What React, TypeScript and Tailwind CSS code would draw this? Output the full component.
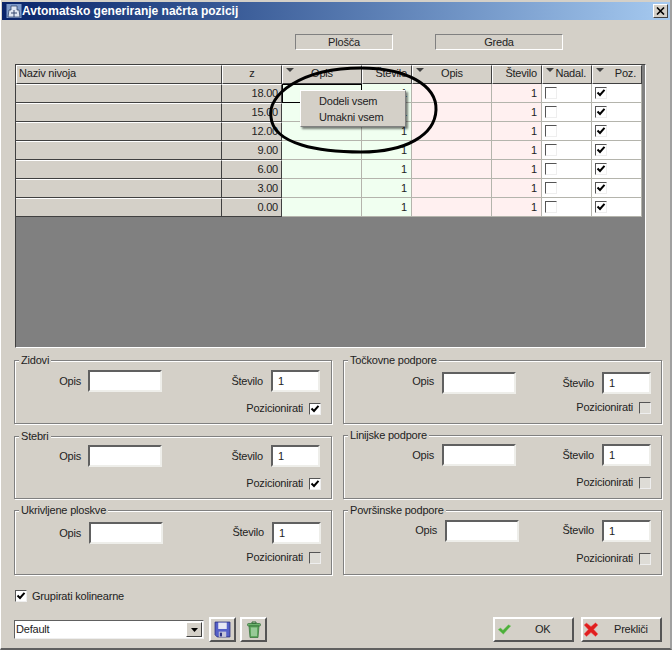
import React from "react";

const rows = ["18.00", "15.00", "12.00", "9.00", "6.00", "3.00", "0.00"];

function Arrow() {
  return (
    <svg width="8" height="5" viewBox="0 0 8 5" className="absolute left-[3px] top-[2px]">
      <polygon points="0,0 8,0 4,4" fill="#404040" />
    </svg>
  );
}

function Tick() {
  return (
    <svg width="10" height="10" viewBox="0 0 10 10" className="block">
      <path d="M1.5 4.5 L4 7 L8.5 1.8" fill="none" stroke="#000" strokeWidth="2" />
    </svg>
  );
}

function Check({ on, fill }: { on?: boolean; fill?: boolean }) {
  return (
    <div className={`w-[12px] h-[12px] shrink-0 border border-t-[#555] border-l-[#555] border-r-[#eee] border-b-[#eee] ${on || fill ? "bg-white" : "bg-[#dedcd6]"}`}>
      {on && <Tick />}
    </div>
  );
}

function HeadCell({ label, arrow, className }: { label: string; arrow?: boolean; className?: string }) {
  return (
    <div className={`relative h-[19px] leading-[15px] border-t border-l border-t-white border-l-white border-r border-b border-r-[#404040] border-b-[#404040] bg-[#d4d0c8] ${className || ""}`}>
      {arrow && <Arrow />}
      {label}
    </div>
  );
}

function Cell({ children, className }: { children?: React.ReactNode; className?: string }) {
  return <div className={`h-[19px] leading-[18px] border-r border-b border-r-[#b4b4ac] border-b-[#b4b4ac] ${className || ""}`}>{children}</div>;
}

function Field({ value, className }: { value?: string; className?: string }) {
  return (
    <div className={`h-[22px] leading-[18px] pl-[5px] bg-white border-2 border-t-[#606060] border-l-[#606060] border-r-[#eeeeea] border-b-[#eeeeea] ${className || ""}`}>
      {value}
    </div>
  );
}

function GroupBox(props: {
  title: string;
  on?: boolean;
  boxClass: string;
  rowClass: string;
  labelClass: string;
  numClass?: string;
  checkClass: string;
}) {
  return (
    <div className={`relative border border-[#808080] shadow-[1px_1px_0_#fff,inset_1px_1px_0_#fff] ${props.boxClass}`}>
      <div className="absolute left-[4px] top-[-7px] px-[2px] bg-[#d4d0c8] leading-[13px]">{props.title}</div>
      <div className={`flex items-center ${props.rowClass}`}>
        <div className={`text-right ${props.labelClass}`}>Opis</div>
        <Field className="w-[74px]" />
        <div className={`ml-auto ${props.numClass || ""}`}>Število</div>
        <Field value="1" className="w-[49px] ml-[8px]" />
      </div>
      <div className={`flex items-center justify-end gap-[6px] h-[12px] ${props.checkClass}`}>
        <span className="mb-px">Pozicionirati</span>
        <Check on={props.on} />
      </div>
    </div>
  );
}

function Floppy() {
  return (
    <svg width="17" height="17" viewBox="0 0 16 16">
      <path d="M1 1 H15 V15 H3 L1 13 Z" fill="#5560c8" stroke="#2a2f80" strokeWidth="0.8" />
      <rect x="4" y="1.5" width="8" height="6" fill="#e8e8f4" />
      <rect x="4.5" y="10" width="7" height="5" fill="#c4c4d8" />
      <rect x="5.5" y="11" width="2" height="3.5" fill="#2a2f80" />
    </svg>
  );
}

function Trash() {
  return (
    <svg width="16" height="19" viewBox="0 0 16 18">
      <path d="M6 1.5 H10 V3 H6 Z" fill="none" stroke="#2f6b35" />
      <rect x="1.5" y="3" width="13" height="2.5" rx="1" fill="#6fb56f" stroke="#2f6b35" strokeWidth="0.7" />
      <path d="M3 5.5 H13 L12 17 H4 Z" fill="#5ea85e" stroke="#2f6b35" strokeWidth="0.7" />
      <path d="M6 7 V15.5 M8 7 V15.5 M10 7 V15.5" stroke="#d0ecd0" strokeWidth="1" />
    </svg>
  );
}

function GreenCheck() {
  return (
    <svg width="15" height="11" viewBox="0 0 18 14">
      <path d="M1 7 L4 5 L7 8 L14 1 L17 2.5 L7.5 13 Z" fill="#4caf3a" stroke="#7cc86a" strokeWidth="0.6" />
    </svg>
  );
}

function RedCross() {
  return (
    <svg width="16" height="15" viewBox="0 0 16 15">
      <path d="M1 3 L3.5 1 L8 4.5 L12.5 0.8 L15 3 L10.8 7.5 L15 12 L12.5 14.5 L8 10.5 L3.5 14.5 L1 12 L5.2 7.5 Z" fill="#e01f1f" stroke="#f07070" strokeWidth="0.5" />
    </svg>
  );
}

function ToolButton({ children }: { children: React.ReactNode }) {
  return (
    <div className="w-[27px] h-[25px] flex items-center justify-center bg-[#d4d0c8] border-2 border-t-white border-l-white border-r-[#555] border-b-[#555]">
      {children}
    </div>
  );
}

export default function App() {
  return (
    <div className="relative w-[672px] h-[650px] overflow-hidden bg-[#d4d0c8] text-[11px] tracking-[-0.2px] text-[#222] font-['Tahoma','Liberation_Sans',sans-serif] border-b-2 border-r-2 border-b-[#606060] border-r-[#a0a0a0] border-l border-l-white">
      {/* title bar */}
      <div className="mt-[2px] h-[18px] ml-[1px] flex items-center bg-gradient-to-r from-[#0a246a] to-[#a6caf0]">
        <svg width="16" height="16" viewBox="0 0 16 16" className="ml-[4px]">
          <rect x="0.5" y="1" width="15" height="14" fill="#7f9ac8" />
          <path d="M5 3 H11 V7 H13 L14 14 H2 L3 7 H5 Z" fill="#dfe6f2" stroke="#34466e" strokeWidth="0.8" />
          <path d="M5 10 H11 M8 7 V14" stroke="#34466e" />
        </svg>
        <span className="text-white font-bold text-[12px] tracking-[0px]">Avtomatsko generiranje načrta pozicij</span>
        <div className="ml-auto mr-[2px] w-[15px] h-[14px] flex items-center justify-center bg-[#d4d0c8] border border-t-white border-l-white border-r-[#404040] border-b-[#404040]">
          <svg width="9" height="8" viewBox="0 0 9 8">
            <path d="M1 0.5 L8 7.5 M8 0.5 L1 7.5" stroke="#000" strokeWidth="1.6" />
          </svg>
        </div>
      </div>

      {/* Plošča / Greda */}
      <div className="mt-[14px] h-[16px] flex ml-[294px]">
        <div className="w-[98px] text-center leading-[14px] border border-t-[#808080] border-l-[#808080] border-r-white border-b-white">Plošča</div>
        <div className="w-[128px] ml-[42px] text-center leading-[14px] border border-t-[#808080] border-l-[#808080] border-r-white border-b-white">Greda</div>
      </div>

      {/* table */}
      <div className="mt-[14px] ml-[14px] w-[631px] h-[284px] bg-[#808080] border border-t-[#404040] border-l-[#404040] border-r-white border-b-white">
        <div className="grid grid-cols-[206px_60px_80px_50px_80px_50px_50px_50px] w-[626px]">
          <HeadCell label="Naziv nivoja" className="pl-[2px]" />
          <HeadCell label="z" className="text-center" />
          <HeadCell label="Opis" arrow className="text-center" />
          <HeadCell label="Število" className="text-right pr-[4px]" />
          <HeadCell label="Opis" arrow className="text-center" />
          <HeadCell label="Število" className="text-right pr-[4px]" />
          <HeadCell label="Nadal." arrow className="text-right pr-[5px]" />
          <HeadCell label="Poz." arrow className="text-right pr-[5px]" />
          {rows.map((z, i) => (
            <React.Fragment key={z}>
              <div className="h-[19px] bg-[#d4d0c8] border-t border-t-white border-r border-b border-r-[#404040] border-b-[#404040]" />
              <div className="h-[19px] leading-[17px] text-right pr-[3px] bg-[#d4d0c8] border-t border-t-white border-r border-b border-r-[#404040] border-b-[#404040]">{z}</div>
              {i === 0 ? <div className="h-[19px] bg-[#f0fff0] border border-black" /> : <Cell className="bg-[#f0fff0]" />}
              <Cell className="bg-[#f0fff0] text-right pr-[4px]">1</Cell>
              <Cell className="bg-[#fff0f0]" />
              <Cell className="bg-[#fff0f0] text-right pr-[4px]">1</Cell>
              <Cell className="bg-white flex items-center pl-[3px]"><Check fill /></Cell>
              <Cell className="bg-white flex items-center pl-[3px]"><Check on /></Cell>
            </React.Fragment>
          ))}
        </div>
      </div>

      {/* group boxes */}
      <div className="mt-[12px] ml-[13px] flex gap-[11px]">
        <div className="w-[318px] flex flex-col">
          <GroupBox title="Zidovi" on boxClass="h-[64px]" rowClass="pt-[9px] pr-[11px]" labelClass="w-[66px] mr-[7px]" checkClass="mt-[11px] pr-[10px]" />
          <GroupBox title="Stebri" on boxClass="h-[63px] mt-[12px]" rowClass="pt-[8px] pr-[11px]" labelClass="w-[66px] mr-[7px]" checkClass="mt-[11px] pr-[10px]" />
          <GroupBox title="Ukrivljene ploskve" boxClass="h-[65px] mt-[11px]" rowClass="pt-[11px] pr-[10px]" labelClass="w-[66px] mr-[8px]" numClass="mb-[2px]" checkClass="mt-[8px] pr-[10px]" />
        </div>
        <div className="w-[319px] flex flex-col">
          <GroupBox title="Točkovne podpore" boxClass="h-[64px]" rowClass="pt-[11px] pr-[10px]" labelClass="w-[90px] mr-[8px] mb-[4px]" checkClass="mt-[8px] pr-[10px]" />
          <GroupBox title="Linijske podpore" boxClass="h-[64px] mt-[11px]" rowClass="pt-[8px] pr-[10px]" labelClass="w-[90px] mr-[8px]" checkClass="mt-[11px] pr-[10px]" />
          <GroupBox title="Površinske podpore" boxClass="h-[65px] mt-[11px]" rowClass="pt-[9px] pr-[10px]" labelClass="w-[93px] mr-[8px] mb-[2px]" numClass="mb-[2px]" checkClass="mt-[11px] pr-[10px]" />
        </div>
      </div>

      {/* options */}
      <div className="mt-[15px] ml-[14px] flex items-center gap-[5px] h-[12px]">
        <Check on />
        Grupirati kolinearne
      </div>

      {/* footer */}
      <div className="mt-[15px] ml-[13px] flex items-center h-[25px]">
        <div className="w-[190px] h-[19px] flex items-center bg-white border border-t-[#606060] border-l-[#606060] border-r-[#eee] border-b-[#eee] pl-[1px]">
          Default
          <div className="ml-auto w-[16px] h-[15px] flex items-center justify-center bg-[#d4d0c8] border border-t-white border-l-white border-r-[#404040] border-b-[#404040] mr-px">
            <svg width="7" height="4" viewBox="0 0 7 4"><polygon points="0,0 7,0 3.5,4" fill="#000" /></svg>
          </div>
        </div>
        <div className="ml-[5px]"><ToolButton><Floppy /></ToolButton></div>
        <div className="ml-[4px]"><ToolButton><Trash /></ToolButton></div>
        <div className="ml-auto mr-[8px] flex gap-[7px]">
          <div className="w-[81px] h-[25px] flex items-center pl-[2px] bg-[#d4d0c8] border-2 border-t-white border-l-white border-r-[#555] border-b-[#555]">
            <GreenCheck />
            <span className="ml-[23px]">OK</span>
          </div>
          <div className="w-[81px] h-[25px] flex items-center bg-[#d4d0c8] border-2 border-t-white border-l-white border-r-[#555] border-b-[#555]">
            <RedCross />
            <span className="ml-[15px]">Prekliči</span>
          </div>
        </div>
      </div>

      {/* context menu */}
      <div className="absolute left-[299px] top-[90px] w-[106px] h-[37px] pt-[2px] pl-[18px] bg-[#d4d0c8] border border-t-white border-l-white border-r-[#808080] border-b-[#808080] shadow-[2px_2px_2px_rgba(0,0,0,0.5)] leading-[16px]">
        <div>Dodeli vsem</div>
        <div>Umakni vsem</div>
      </div>

      {/* hand-drawn ring over the header */}
      <svg width="672" height="200" className="absolute left-0 top-0 pointer-events-none">
        <path d="M270 117 C266 95 300 68 360 68 C405 68 436 85 435 110 C434 135 405 152 360 152 C320 152 272 145 270 117 Z" fill="none" stroke="#000" strokeWidth="3" />
      </svg>
    </div>
  );
}
